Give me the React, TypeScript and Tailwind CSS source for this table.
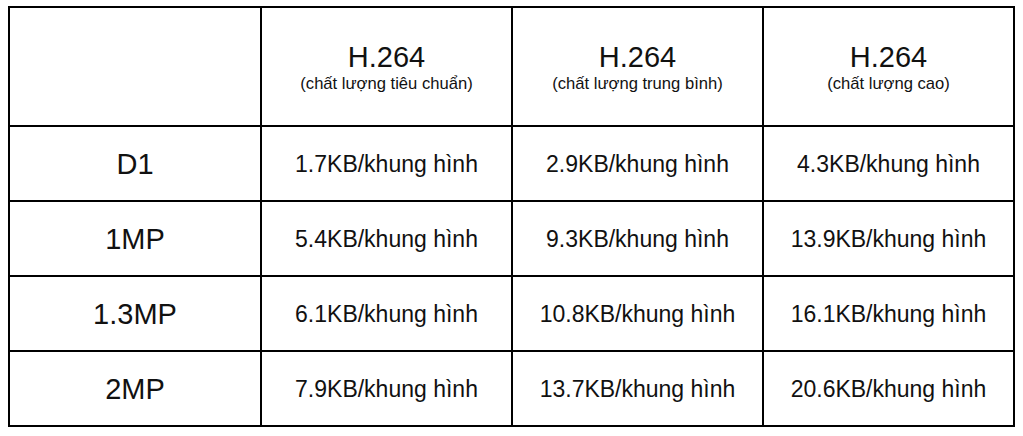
const cols = [
  'chất lượng tiêu chuẩn',
  'chất lượng trung bình',
  'chất lượng cao',
];

const rows = [
  { label: 'D1', values: ['1.7KB/khung hình', '2.9KB/khung hình', '4.3KB/khung hình'] },
  { label: '1MP', values: ['5.4KB/khung hình', '9.3KB/khung hình', '13.9KB/khung hình'] },
  { label: '1.3MP', values: ['6.1KB/khung hình', '10.8KB/khung hình', '16.1KB/khung hình'] },
  { label: '2MP', values: ['7.9KB/khung hình', '13.7KB/khung hình', '20.6KB/khung hình'] },
];

export default function App() {
  return (
    <div className="w-[1023px] h-[436px] bg-white pl-[8px] pt-[6px] font-['Liberation_Sans',Arial,sans-serif] text-[#111]">
      <table className="border-collapse table-fixed w-[1007px]">
        <thead>
          <tr className="h-[119px]">
            <th className="border-2 border-black w-[252px]"></th>
            {cols.map((c) => (
              <th key={c} className="border-2 border-black font-normal text-center align-middle pt-[2px]">
                <div className="text-[29px] leading-[32px]">H.264</div>
                <div className="text-[16.6px] leading-[20px] mt-[1px]">({c})</div>
              </th>
            ))}
          </tr>
        </thead>
        <tbody>
          {rows.map((r) => (
            <tr key={r.label} className="h-[75px]">
              <td className="border-2 border-black text-center text-[29px] leading-[32px]">{r.label}</td>
              {r.values.map((v, i) => (
                <td key={i} className="border-2 border-black text-center text-[23px] leading-[28px]">
                  {v}
                </td>
              ))}
            </tr>
          ))}
        </tbody>
      </table>
    </div>
  );
}
